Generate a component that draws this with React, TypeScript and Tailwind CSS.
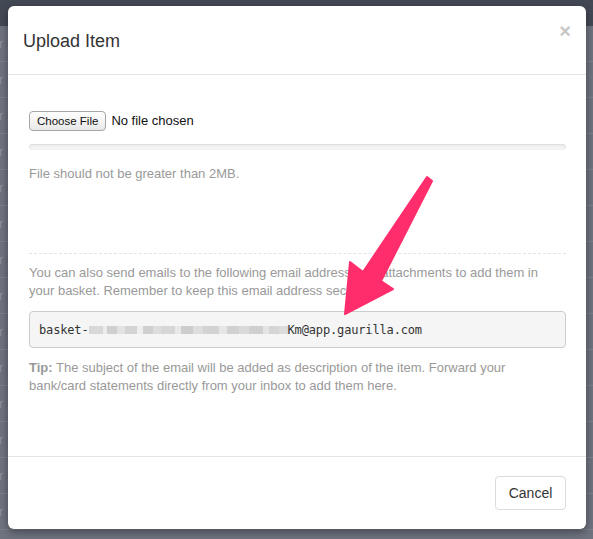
import React from "react";

const rows = Array.from({ length: 14 });

function BlurBlocks() {
  const blocks = [
    [14, "#d8d8d8"], [4, "#ececec"], [10, "#cfcfcf"], [8, "#e2e2e2"], [12, "#d4d4d4"],
    [6, "#eeeeee"], [10, "#d0d0d0"], [8, "#dedede"], [14, "#d6d6d6"], [6, "#e8e8e8"],
    [12, "#cdcdcd"], [10, "#dddddd"], [16, "#d3d3d3"], [8, "#e6e6e6"], [12, "#d1d1d1"],
    [10, "#dadada"], [14, "#cfcfcf"], [6, "#e4e4e4"], [10, "#d5d5d5"], [9, "#dcdcdc"],
  ] as const;
  return (
    <span className="inline-flex h-[8px] w-[199px] items-stretch">
      {blocks.map(([w, c], i) => (
        <span key={i} style={{ width: w, backgroundColor: c }} className="block h-full" />
      ))}
    </span>
  );
}

export default function App() {
  return (
    <div
      className="relative h-[539px] w-[593px] overflow-hidden bg-[#6f7380]"
      style={{ fontFamily: '"Liberation Sans", Arial, sans-serif' }}
    >
      {/* page behind the modal */}
      <div className="h-[26px] bg-[#434855]" />
      <div className="flex flex-col">
        {rows.map((_, i) => (
          <div key={i} className="flex h-[36px] items-center border-b border-[#7c808b] text-[13px] text-[#8c909a]">
            <span className="-ml-[1px]">r</span>
          </div>
        ))}
      </div>

      {/* modal */}
      <div className="absolute left-[8px] top-[6px] flex h-[523px] w-[578px] flex-col rounded-[6px] bg-white shadow-[0_3px_9px_rgba(0,0,0,0.4)]">
        <div className="flex h-[69px] justify-between border-b border-[#e5e5e5] pl-[15px] pr-[15px]">
          <h3 className="mt-[23px] text-[18px] font-medium leading-[24px] text-[#333]">Upload Item</h3>
          <span className="mt-[15px] text-[20px] font-bold leading-[20px] text-[#c8c8c8]">×</span>
        </div>

        <div className="flex flex-1 flex-col pl-[21px] pr-[20px]">
          <div className="mt-[36px] flex items-center gap-[5px]">
            <span className="rounded-[4px] border border-[#a6a6a6] bg-gradient-to-b from-white to-[#e8e8e8] px-[7px] py-[1px] text-[11.5px] leading-[16px] text-[#111]">
              Choose File
            </span>
            <span className="text-[13px] text-[#111]">No file chosen</span>
          </div>
          <div className="mt-[13px] h-[6px] rounded-[4px] bg-[#f3f3f3] shadow-[inset_0_1px_2px_rgba(0,0,0,0.1)]" />
          <p className="mt-[15px] text-[13px] leading-[18px] text-[#999]">File should not be greater than 2MB.</p>

          <div className="mt-[70px] border-t border-dashed border-[#e3e3e3]" />
          <p className="mt-[10px] text-[13px] leading-[18px] text-[#999]">
            You can also send emails to the following email address with attachments to add them in your basket. Remember to keep this email address secret.
          </p>
          <div
            className="mt-[11px] flex h-[37px] items-center rounded-[4px] border border-[#cccccc] bg-[#f5f5f5] pl-[9px] text-[12px] tracking-[-0.15px] text-[#333]"
            style={{ fontFamily: '"DejaVu Sans Mono", "Liberation Mono", monospace' }}
          >
            <span>basket-</span>
            <BlurBlocks />
            <span>Km@app.gaurilla.com</span>
          </div>
          <p className="mt-[11px] text-[13px] leading-[18px] text-[#999]">
            <b className="font-bold">Tip:</b> The subject of the email will be added as description of the item. Forward your bank/card statements directly from your inbox to add them here.
          </p>
        </div>

        <div className="flex h-[73px] items-start justify-end border-t border-[#e5e5e5] pr-[20px] pt-[19px]">
          <button className="h-[34px] w-[71px] rounded-[4px] border border-[#dcdcdc] bg-white text-[14px] text-[#333]">
            Cancel
          </button>
        </div>
      </div>

      {/* annotation arrow */}
      <svg className="pointer-events-none absolute left-0 top-0" width="593" height="539" viewBox="0 0 593 539">
        <polygon
          points="427,177 432,181 381,281 393,289 345,314 350,262 363,272"
          fill="#ff2d6b"
          stroke="#ff2d6b"
          strokeWidth="2"
          strokeLinejoin="round"
        />
      </svg>
    </div>
  );
}
